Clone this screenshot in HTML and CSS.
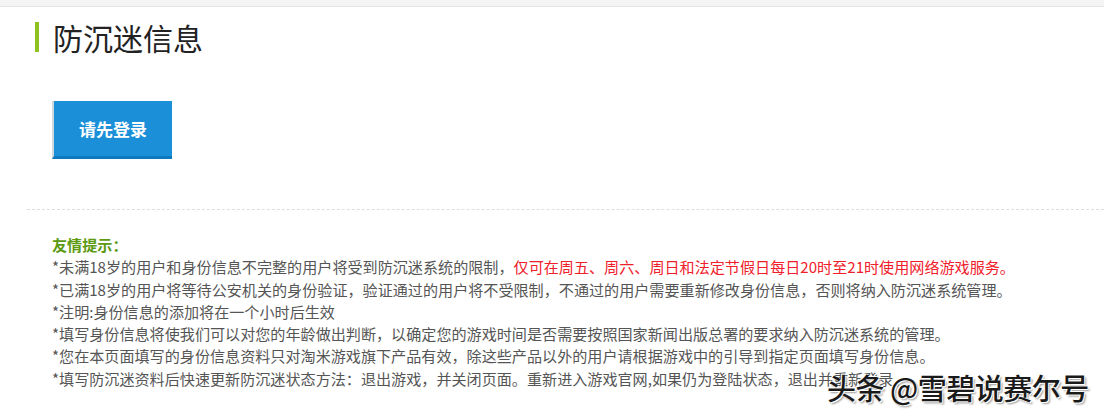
FILE: index.html
```html
<!DOCTYPE html>
<html lang="zh">
<head>
<meta charset="utf-8">
<title>防沉迷信息</title>
<link rel="stylesheet" href="styles.css">
</head>
<body>
<div class="topbar"></div>
<div class="page">
  <h1 class="title">防沉迷信息</h1>
  <div class="login-wrap">
    <a class="login-btn" href="#">请先登录</a>
  </div>
  <div class="divider"></div>
  <div class="tips">
    <div class="tips-head">友情提示：</div>
    <p>*未满18岁的用户和身份信息不完整的用户将受到防沉迷系统的限制，<span class="red">仅可在周五、周六、周日和法定节假日每日20时至21时使用网络游戏服务。</span></p>
    <p>*已满18岁的用户将等待公安机关的身份验证，验证通过的用户将不受限制，不通过的用户需要重新修改身份信息，否则将纳入防沉迷系统管理。</p>
    <p>*注明:身份信息的添加将在一个小时后生效</p>
    <p>*填写身份信息将使我们可以对您的年龄做出判断，以确定您的游戏时间是否需要按照国家新闻出版总署的要求纳入防沉迷系统的管理。</p>
    <p>*您在本页面填写的身份信息资料只对淘米游戏旗下产品有效，除这些产品以外的用户请根据游戏中的引导到指定页面填写身份信息。</p>
    <p>*填写防沉迷资料后快速更新防沉迷状态方法：退出游戏，并关闭页面。重新进入游戏官网,如果仍为登陆状态，退出并重新登录。</p>
  </div>
</div>
<div class="watermark">头条 @雪碧说赛尔号</div>
</body>
</html>
```
FILE: styles.css
```css
* { box-sizing: border-box; }
html, body { margin: 0; padding: 0; background: #fff; }
body {
  width: 1104px;
  height: 412px;
  overflow: hidden;
  position: relative;
  font-family: "Noto Sans CJK SC", "Microsoft YaHei", sans-serif;
  color: #555;
}
.topbar {
  height: 7px;
  background: #f4f4f4;
  border-bottom: 1px solid #e2e2e2;
}
.page {
  padding-left: 27px;
}
.title {
  margin: 15px 0 0 8px;
  padding-left: 14px;
  border-left: 4px solid #8dc21f;
  font-size: 30px;
  line-height: 30px;
  font-weight: normal;
  color: #222;
  height: 30px;
  display: flex;
  align-items: center;
}
.login-wrap {
  padding: 49px 0 0 25px;
  height: 157px;
}
.login-btn {
  display: flex;
  align-items: center;
  justify-content: center;
  width: 120px;
  height: 58px;
  background: #1b90d9;
  border-left: 2px solid #cfd8de;
  border-bottom: 3px solid #0f79c0;
  color: #fff;
  font-weight: bold;
  font-size: 17px;
  text-decoration: none;
}
.divider {
  border-top: 1px dashed #dedede;
}
.tips {
  padding: 23px 0 0 25px;
  font-size: 15.1px;
  line-height: 22.3px;
}
.tips-head {
  color: #5c9a12;
  font-weight: bold;
}
.tips p {
  margin: 0;
  white-space: nowrap;
}
.red { color: #f0202a; }
.watermark {
  position: absolute;
  left: 827px;
  top: 367px;
  font-size: 29px;
  line-height: 40px;
  font-weight: 500;
  color: #1a1a1a;
  letter-spacing: -0.5px;
  text-shadow: 1px 1px 0 #fff, -1px -1px 0 #fff, 2px 2px 2px rgba(0,0,0,0.4);
}
```
